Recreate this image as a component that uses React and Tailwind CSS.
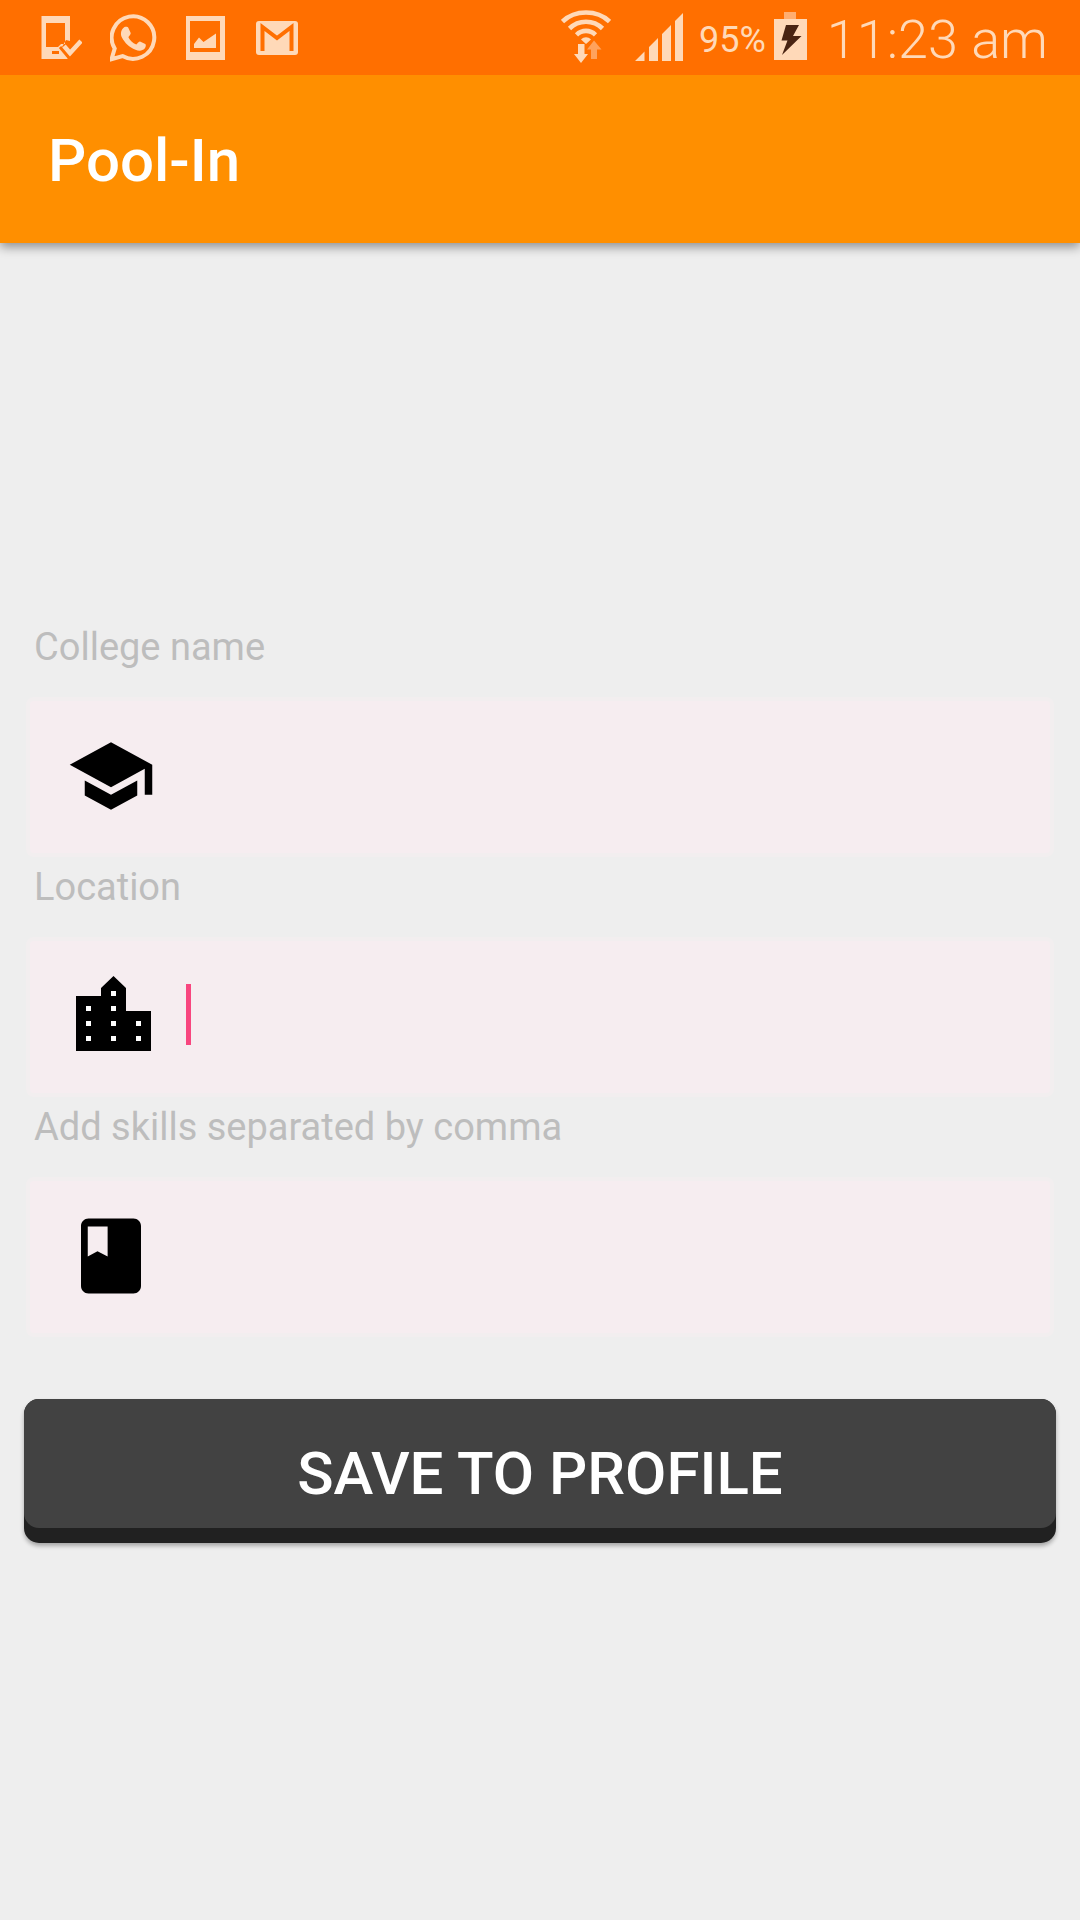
import React, { useState } from 'react'

function SchoolIcon() {
  return (
    <svg viewBox="0 0 24 24" className="w-[90px] h-[90px] shrink-0" fill="#000" aria-hidden="true">
      <path d="M5 13.18v4L12 21l7-3.82v-4L12 17l-7-3.82zM12 3L1 9l11 6 9-4.91V17h2V9L12 3z" />
    </svg>
  )
}

function CityIcon() {
  return (
    <svg viewBox="0 0 90 90" className="w-[90px] h-[90px] shrink-0" aria-hidden="true">
      <path fill="#000" d="M47.5 5L60 17v23h25v40H10V25h25v-8z" />
      <path
        fill="#fff"
        d="M20 35h5v5h-5zM20 50h5v5h-5zM20 65h5v5h-5zM45 20h5v5h-5zM45 35h5v5h-5zM45 50h5v5h-5zM45 65h5v5h-5zM70 50h5v5h-5zM70 65h5v5h-5z"
      />
    </svg>
  )
}

function BookIcon() {
  return (
    <svg viewBox="0 0 24 24" className="w-[90px] h-[90px] shrink-0" fill="#000" aria-hidden="true">
      <path d="M18 2H6c-1.1 0-2 .9-2 2v16c0 1.1.9 2 2 2h12c1.1 0 2-.9 2-2V4c0-1.1-.9-2-2-2zM5.8 4.1h5.3v8L8.4 10.7 5.8 12.1z" />
    </svg>
  )
}

function StatusBar() {
  return (
    <div className="relative z-10 flex h-[75px] items-center justify-between bg-[#ff6f00] pl-10 pr-8 text-[#ffd9b8]">
      <div className="flex items-center gap-7">
        {/* phone with tick */}
        <svg viewBox="0 0 42 75" className="w-[42px] h-[75px]" fill="currentColor" aria-hidden="true">
          <path
            fillRule="evenodd"
            d="M1.500 16H30v25l-4-1-4 7 6 12H1.500zM6 23v24h12l3-3h4V23zM12 51v3h7v-3z"
          />
          <path fill="none" stroke="#ff6f00" strokeWidth="3" d="M20 47l10 12" />
          <path fill="none" stroke="currentColor" strokeWidth="4.5" d="M24 46l6 7 11-12" />
        </svg>
        {/* whatsapp */}
        <svg viewBox="1 0 48 75" className="w-[48px] h-[75px]" aria-hidden="true">
          <path
            fill="none"
            stroke="currentColor"
            strokeWidth="4"
            d="M2.500 59.200L5.700 48.500A21.300 21.300 0 1 1 13.500 56.100z"
          />
          <path
            fill="currentColor"
            d="M15.500 27c1.500-.5 3.200-.4 3.800.7l2.400 5.300c.4 1.300-1.900 3.300-2.300 4.200 1.600 3.300 4.200 5.800 7.900 7.200 1-.5 2.500-3.300 3.700-2.900l5.300 2.600c.9.700.6 3.200-.6 4.500-2.400 2.600-6 2.500-9.200 1.200-6.400-2.500-10.500-6.600-13.700-12.500-1.700-3.600-.7-8.100 2.700-10.300z"
          />
        </svg>
        {/* picture */}
        <svg viewBox="1 0 40 75" className="w-[40px] h-[75px]" fill="currentColor" aria-hidden="true">
          <path fillRule="evenodd" d="M1 16h39v44H1zM5 21v31h30V21z" />
          <path d="M9 48v-4l5-6.500 4.500 4.500L31 33.500V48z" />
        </svg>
        {/* gmail */}
        <svg viewBox="1 0 48 75" className="w-[48px] h-[75px]" aria-hidden="true">
          <rect x="3" y="21" width="42" height="34" rx="3" fill="currentColor" />
          <path fill="none" stroke="#ff6f00" strokeWidth="4" d="M9.500 51V27L24 38l14.500-11v24" />
        </svg>
      </div>

      <div className="flex items-center">
        {/* wifi */}
        <svg viewBox="0 0 50 75" className="w-[50px] h-[75px]" aria-hidden="true">
          <g fill="none" stroke="currentColor" strokeWidth="4.600">
            <path d="M1.500 21.500C14 9.500 36 9.500 48.500 21.500" />
            <path d="M8.500 28.500C17.500 19.500 32.500 19.500 41.500 28.500" />
            <path d="M15.500 34.800C21 29.500 29 29.500 34.500 34.800" />
          </g>
          <path fill="currentColor" d="M20 39.500c3-3 7-3 10 0l-5 4.500z" />
          <path fill="#ffa25c" d="M33 40.500l7.500 9H36V59h-6v-9.500h-4z" />
          <path fill="currentColor" d="M17 44h6.500v10H27l-7 9-7-9h4z" />
        </svg>
        {/* signal */}
        <svg viewBox="0 0 48 75" className="ml-6 w-[48px] h-[75px]" fill="currentColor" aria-hidden="true">
          <path d="M0 61l9.500-9.500V61zM14 61V47l9-9v23zM27 61V34l9-9v36zM40 61V21l8-8v48z" />
        </svg>
        <span className="ml-4 pt-1 text-4xl leading-[56px]">95%</span>
        {/* battery */}
        <svg viewBox="0 0 33 75" className="ml-2 w-[33px] h-[75px]" aria-hidden="true">
          <path fill="#ffae70" d="M10 12h12v8H10z" />
          <path fill="currentColor" d="M0 19h33v41H0z" />
          <path fill="#4a2412" d="M12 25h13l-6 11h8.500L8 55l5.500-14.500H7.500z" />
        </svg>
        <span className="ml-5 pt-1 text-[54px] leading-[64px] font-light">11:23 am</span>
      </div>
    </div>
  )
}

function Field({ id, label, icon, focused }) {
  const [value, setValue] = useState('')

  return (
    <div>
      <label htmlFor={id} className="block pt-1.5 pb-[26px] pl-2 text-[38px] leading-[48px] text-[#bdbdbd]">
        {label}
      </label>
      <div className="flex h-40 items-center gap-[30px] rounded-lg border-4 border-[#f2eeef] bg-[#f6edf0] px-9 pb-0.5">
        {icon}
        <div className="relative flex flex-1 items-center pb-1">
          {focused && !value && <span className="absolute left-0 h-[61px] w-[5px] bg-[#f8467f]" />}
          <input
            id={id}
            type="text"
            className="w-full bg-transparent text-5xl leading-[64px] text-gray-900 caret-[#f8467f] outline-none"
            value={value}
            onChange={(e) => setValue(e.target.value)}
          />
        </div>
      </div>
    </div>
  )
}

export default function App() {
  return (
    <div className="flex min-h-screen flex-col bg-[#eeeeee] font-['Roboto',sans-serif]">
      <StatusBar />

      <header className="flex h-[168px] items-center bg-[#ff8f00] px-12 pt-1 shadow-[0_4px_10px_rgba(0,0,0,0.4)]">
        <h1 className="text-6xl font-medium text-white">Pool-In</h1>
      </header>

      <main className="flex flex-1 flex-col justify-center px-6 pb-[3px]">
        <form onSubmit={(e) => e.preventDefault()}>
          <div className="px-0.5">
            <Field id="college" label="College name" icon={<SchoolIcon />} />
            <Field id="location" label="Location" icon={<CityIcon />} focused />
            <Field id="skills" label="Add skills separated by comma" icon={<BookIcon />} />
          </div>

          <button
            type="submit"
            className="mt-[62px] block w-full rounded-[15px] bg-[#212121] pb-[15px] shadow-[0_3px_4px_rgba(0,0,0,0.3)]"
          >
            <span className="block h-[129px] rounded-[15px] bg-[#424242] pt-5 text-6xl leading-[109px] font-medium text-white">
              SAVE TO PROFILE
            </span>
          </button>
        </form>
      </main>
    </div>
  )
}
